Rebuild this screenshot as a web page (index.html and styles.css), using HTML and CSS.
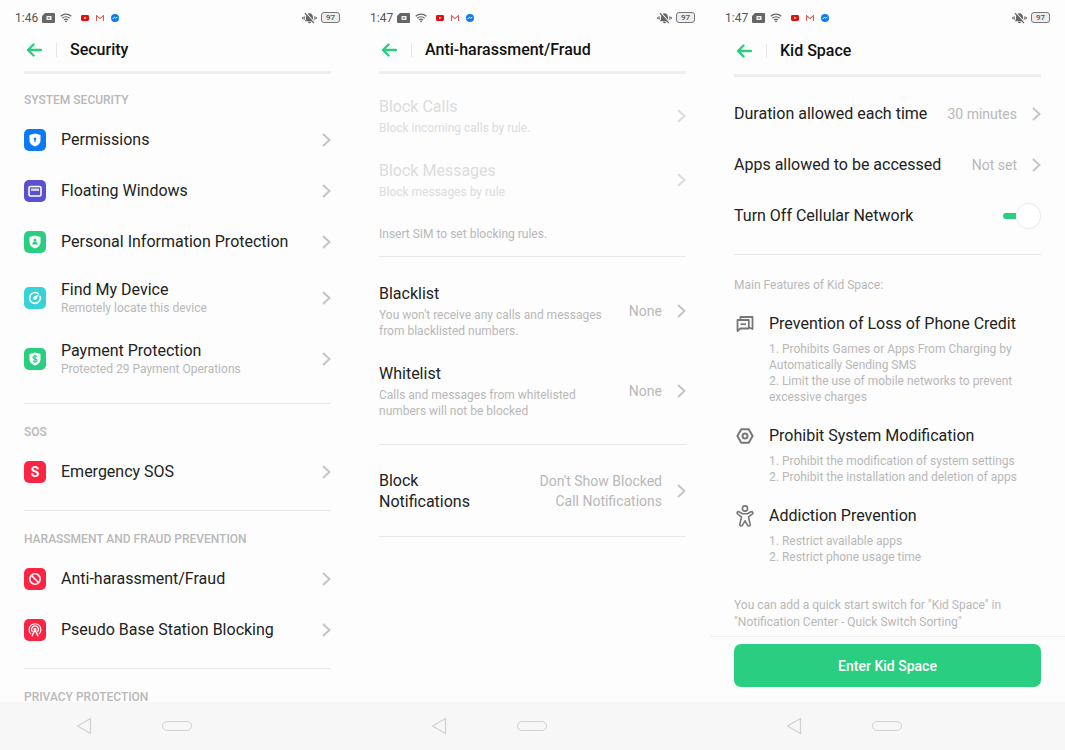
FILE: index.html
```html
<!DOCTYPE html>
<html lang="en">

<head>
    <meta charset="UTF-8">
    <meta name="viewport" content="width=device-width, initial-scale=1.0">
    <title>Security</title>
    <link rel="stylesheet" href="styles.css">
</head>

<body>
    <!-- shared icons -->
    <svg class="sprite" aria-hidden="true">
        <symbol id="sim" viewBox="0 0 13 10">
            <path d="M3 0h9a1 1 0 0 1 1 1v8a1 1 0 0 1-1 1H1a1 1 0 0 1-1-1V3z" fill="#666" />
            <rect x="4.5" y="3" width="5" height="4" fill="#f2f2f2" />
            <path d="M5.8 4l2 2M7.8 4l-2 2" stroke="#666" stroke-width=".7" />
        </symbol>
        <symbol id="wifi" viewBox="0 0 12 10">
            <g fill="none" stroke="#666" stroke-width="1.2">
                <path d="M.7 3.2a8 8 0 0 1 10.6 0" />
                <path d="M2.4 5.2a5.4 5.4 0 0 1 7.2 0" />
                <path d="M4 7a3 3 0 0 1 4 0" />
            </g>
            <path d="M4.8 8l1.2 1.6L7.2 8a2 2 0 0 0-2.4 0z" fill="#666" />
        </symbol>
        <symbol id="youtube" viewBox="0 0 8 6">
            <rect width="8" height="6" rx="1.4" fill="#e80c0c" />
            <path d="M3.2 1.7v2.6L5.5 3z" fill="#fff" />
        </symbol>
        <symbol id="gmail" viewBox="0 0 8 6">
            <path d="M.5 6V.6L4 3.6 7.5.6V6" fill="none" stroke="#dd5a50" stroke-width="1.1" />
        </symbol>
        <symbol id="messenger" viewBox="0 0 8 8">
            <circle cx="4" cy="4" r="4" fill="#0b7cf5" />
            <path d="M1.7 5l1.7-1.8 1.2 1L6.3 3.2" fill="none" stroke="#fff" stroke-width="1" />
        </symbol>
        <symbol id="mute" viewBox="0 0 15 12">
            <path d="M2.8 9.200c1-1 1.200-2 1.200-3.800C4 3 5.400 1.300 7.500 1.300S11 3 11 5.400c0 1.800.2 2.800 1.200 3.800z M6 9.800h3a1.500 1.500 0 0 1-3 0z" fill="#666" />
            <path d="M4 .9l9 10" stroke="#fdfdfd" stroke-width="1.200" />
            <path d="M2.900 1.100l9 10" stroke="#666" stroke-width="1.300" />
            <path d="M2.200 4.200v3.600M.7 5v2M12.800 4.200v3.600M14.300 5v2" stroke="#777" stroke-width="1.200" />
        </symbol>
        <symbol id="back" viewBox="0 0 16 14">
            <path d="M7.500 1.500L2 7l5.500 5.500M2 7h13" fill="none" stroke="#2ace80" stroke-width="2.400" stroke-linecap="round" stroke-linejoin="round" />
        </symbol>
        <symbol id="chevron" viewBox="0 0 9 14">
            <path d="M1 1l6.500 6L1 13" fill="none" stroke="currentColor" stroke-width="1.900" />
        </symbol>
        <symbol id="nav-back" viewBox="0 0 16 18">
            <path d="M14.500 1.500v15L1.500 9z" fill="none" stroke="#d2d2d2" stroke-width="1.300" stroke-linejoin="round" />
        </symbol>
    </svg>

    <main class="phones">
        <section class="phone">
            <div class="status">
                <span class="time">1:46</span>
                <svg width="13" height="10"><use href="#sim" /></svg>
                <svg class="wifi" width="12" height="10"><use href="#wifi" /></svg>
                <svg class="app" width="8" height="6"><use href="#youtube" /></svg>
                <svg class="app" width="8" height="6"><use href="#gmail" /></svg>
                <svg class="app" width="8" height="8"><use href="#messenger" /></svg>
                <svg class="mute" width="15" height="12"><use href="#mute" /></svg>
                <span class="battery">97</span>
            </div>
            <header class="header">
                <a href="#" aria-label="Back"><svg width="16" height="14"><use href="#back" /></svg></a>
                <h1>Security</h1>
            </header>
            <div class="content">
                <div class="group first">
                    <h2>SYSTEM SECURITY</h2>
                    <a class="row" href="#">
                        <svg class="icon blue" viewBox="0 0 22 22">
                            <path d="M11 4.500l5.500 1.500v5.500c0 3-2.500 5-5.500 6-3-1-5.500-3-5.500-6V6z" fill="#fff" />
                            <circle cx="11" cy="9.800" r="1.300" fill="#0d7af5" />
                            <path d="M11 10v3.200" stroke="#0d7af5" stroke-width="1.200" />
                        </svg>
                        <span class="text"><span class="title">Permissions</span></span>
                        <svg class="chevron"><use href="#chevron" /></svg>
                    </a>
                    <a class="row" href="#">
                        <svg class="icon purple" viewBox="0 0 22 22">
                            <rect x="5" y="6.500" width="12" height="9.500" rx="1.500" fill="none" stroke="#fff" stroke-width="1.600" />
                            <rect x="7" y="8.500" width="8" height="2.500" fill="#d6d2f8" />
                        </svg>
                        <span class="text"><span class="title">Floating Windows</span></span>
                        <svg class="chevron"><use href="#chevron" /></svg>
                    </a>
                    <a class="row" href="#">
                        <svg class="icon green" viewBox="0 0 22 22">
                            <path d="M11 4.500l5.500 1.500v5.500c0 3-2.500 5-5.500 6-3-1-5.500-3-5.500-6V6z" fill="#fff" />
                            <circle cx="11" cy="8.900" r="1.500" fill="#2ace80" />
                            <path d="M8.200 13.600c.2-2 1.300-3 2.800-3s2.600 1 2.800 3z" fill="#2ace80" />
                        </svg>
                        <span class="text"><span class="title">Personal Information Protection</span></span>
                        <svg class="chevron"><use href="#chevron" /></svg>
                    </a>
                    <a class="row tall" href="#">
                        <svg class="icon teal" viewBox="0 0 22 22">
                            <path d="M14.300 6.700A5.400 5.400 0 1 0 16.200 9.500" fill="none" stroke="#fff" stroke-width="1.600" stroke-linecap="round" />
                            <path d="M15 7.200l-2.300 4.600a1.900 1.900 0 1 1-2.500-2.400z" fill="#fff" />
                        </svg>
                        <span class="text"><span class="title">Find My Device</span><span class="sub">Remotely locate this device</span></span>
                        <svg class="chevron"><use href="#chevron" /></svg>
                    </a>
                    <a class="row tall" href="#">
                        <svg class="icon green" viewBox="0 0 22 22">
                            <path d="M11 4.500l5.500 1.500v5.500c0 3-2.500 5-5.500 6-3-1-5.500-3-5.500-6V6z" fill="#fff" />
                            <path d="M13 8.800c-.5-.8-1.100-1-2-1-1.200 0-2 .6-2 1.500 0 2.100 4.100 1 4.100 3.100 0 .9-.9 1.500-2.100 1.500-1 0-1.700-.4-2.100-1.100M11 6.800v8" fill="none" stroke="#2ace80" stroke-width="1.100" />
                        </svg>
                        <span class="text"><span class="title">Payment Protection</span><span class="sub">Protected 29 Payment Operations</span></span>
                        <svg class="chevron"><use href="#chevron" /></svg>
                    </a>
                </div>
                <div class="group">
                    <h2>SOS</h2>
                    <a class="row" href="#">
                        <span class="icon red letter">S</span>
                        <span class="text"><span class="title">Emergency SOS</span></span>
                        <svg class="chevron"><use href="#chevron" /></svg>
                    </a>
                </div>
                <div class="group">
                    <h2>HARASSMENT AND FRAUD PREVENTION</h2>
                    <a class="row" href="#">
                        <svg class="icon red" viewBox="0 0 22 22">
                            <circle cx="11" cy="11" r="5.200" fill="none" stroke="#fff" stroke-width="1.600" />
                            <path d="M7.300 7.300l7.400 7.400" stroke="#fff" stroke-width="1.600" />
                        </svg>
                        <span class="text"><span class="title">Anti-harassment/Fraud</span></span>
                        <svg class="chevron"><use href="#chevron" /></svg>
                    </a>
                    <a class="row" href="#">
                        <svg class="icon red" viewBox="0 0 22 22">
                            <g fill="none" stroke="#fff" stroke-width="1.200" stroke-linecap="round">
                                <path d="M6.700 14.700a5.900 5.900 0 1 1 8.600 0" />
                                <path d="M8.300 12.600a3.400 3.400 0 1 1 5.400 0" />
                                <path d="M11 10.500l-2.800 6.300M11 10.500l2.800 6.300" stroke-width="1.500" />
                            </g>
                            <circle cx="11" cy="10.300" r="1.300" fill="#fff" />
                        </svg>
                        <span class="text"><span class="title">Pseudo Base Station Blocking</span></span>
                        <svg class="chevron"><use href="#chevron" /></svg>
                    </a>
                </div>
                <div class="group">
                    <h2>PRIVACY PROTECTION</h2>
                </div>
            </div>
            <nav class="navbar">
                <a href="#" aria-label="Back"><svg width="16" height="18"><use href="#nav-back" /></svg></a>
                <a class="home" href="#" aria-label="Home"></a>
            </nav>
        </section>

        <section class="phone">
            <div class="status">
                <span class="time">1:47</span>
                <svg width="13" height="10"><use href="#sim" /></svg>
                <svg class="wifi" width="12" height="10"><use href="#wifi" /></svg>
                <svg class="app" width="8" height="6"><use href="#youtube" /></svg>
                <svg class="app" width="8" height="6"><use href="#gmail" /></svg>
                <svg class="app" width="8" height="8"><use href="#messenger" /></svg>
                <svg class="mute" width="15" height="12"><use href="#mute" /></svg>
                <span class="battery">97</span>
            </div>
            <header class="header">
                <a href="#" aria-label="Back"><svg width="16" height="14"><use href="#back" /></svg></a>
                <h1>Anti-harassment/Fraud</h1>
            </header>
            <div class="content fraud">
                <div class="group plain">
                    <a class="row disabled" href="#" aria-disabled="true">
                        <span class="text"><span class="title">Block Calls</span><span class="sub">Block incoming calls by rule.</span></span>
                        <svg class="chevron"><use href="#chevron" /></svg>
                    </a>
                    <a class="row disabled" href="#" aria-disabled="true">
                        <span class="text"><span class="title">Block Messages</span><span class="sub">Block messages by rule</span></span>
                        <svg class="chevron"><use href="#chevron" /></svg>
                    </a>
                    <p class="hint">Insert SIM to set blocking rules.</p>
                </div>
                <div class="group">
                    <a class="row list" href="#">
                        <span class="text"><span class="title">Blacklist</span><span class="sub">You won't receive any calls and messages from blacklisted numbers.</span></span>
                        <span class="value">None</span>
                        <svg class="chevron"><use href="#chevron" /></svg>
                    </a>
                    <a class="row list" href="#">
                        <span class="text"><span class="title">Whitelist</span><span class="sub">Calls and messages from whitelisted numbers will not be blocked</span></span>
                        <span class="value">None</span>
                        <svg class="chevron"><use href="#chevron" /></svg>
                    </a>
                </div>
                <div class="group">
                    <a class="row" href="#">
                        <span class="text"><span class="title">Block<br>Notifications</span></span>
                        <span class="value">Don't Show Blocked<br>Call Notifications</span>
                        <svg class="chevron"><use href="#chevron" /></svg>
                    </a>
                </div>
            </div>
            <nav class="navbar">
                <a href="#" aria-label="Back"><svg width="16" height="18"><use href="#nav-back" /></svg></a>
                <a class="home" href="#" aria-label="Home"></a>
            </nav>
        </section>

        <section class="phone kids">
            <div class="status">
                <span class="time">1:47</span>
                <svg width="13" height="10"><use href="#sim" /></svg>
                <svg class="wifi" width="12" height="10"><use href="#wifi" /></svg>
                <svg class="app" width="8" height="6"><use href="#youtube" /></svg>
                <svg class="app" width="8" height="6"><use href="#gmail" /></svg>
                <svg class="app" width="8" height="8"><use href="#messenger" /></svg>
                <svg class="mute" width="15" height="12"><use href="#mute" /></svg>
                <span class="battery">97</span>
            </div>
            <header class="header">
                <a href="#" aria-label="Back"><svg width="16" height="14"><use href="#back" /></svg></a>
                <h1>Kid Space</h1>
            </header>
            <div class="content">
                <div class="group plain">
                    <a class="row" href="#">
                        <span class="text"><span class="title">Duration allowed each time</span></span>
                        <span class="value">30 minutes</span>
                        <svg class="chevron"><use href="#chevron" /></svg>
                    </a>
                    <a class="row" href="#">
                        <span class="text"><span class="title">Apps allowed to be accessed</span></span>
                        <span class="value">Not set</span>
                        <svg class="chevron"><use href="#chevron" /></svg>
                    </a>
                    <div class="row">
                        <label class="text title" for="cellular">Turn Off Cellular Network</label>
                        <input class="switch" type="checkbox" role="switch" id="cellular" checked>
                    </div>
                </div>
                <div class="features">
                    <p>Main Features of Kid Space:</p>
                    <div class="feature">
                        <svg viewBox="0 0 18 22">
                            <g fill="none" stroke="#777" stroke-width="1.800" stroke-linejoin="round">
                                <path d="M1.500 7h11.300v8.500H4.300L1.500 18z" />
                                <path d="M4.500 7V4h12v12l-3.500-1.500" />
                                <path d="M4.500 11.200h5.500" />
                            </g>
                        </svg>
                        <div>
                            <h3>Prevention of Loss of Phone Credit</h3>
                            <p>1. Prohibits Games or Apps From Charging by Automatically Sending SMS</p>
                            <p>2. Limit the use of mobile networks to prevent excessive charges</p>
                        </div>
                    </div>
                    <div class="feature">
                        <svg viewBox="0 0 18 22">
                            <g fill="none" stroke="#777" stroke-width="2" stroke-linejoin="round">
                                <path d="M5.300 4.200h7.400L16.600 11l-3.900 6.800H5.300L1.400 11z" />
                                <circle cx="9" cy="11" r="2.500" />
                            </g>
                        </svg>
                        <div>
                            <h3>Prohibit System Modification</h3>
                            <p>1. Prohibit the modification of system settings</p>
                            <p>2. Prohibit the installation and deletion of apps</p>
                        </div>
                    </div>
                    <div class="feature">
                        <svg viewBox="0 0 18 22">
                            <g fill="none" stroke="#777" stroke-width="1.600" stroke-linejoin="round">
                                <circle cx="9" cy="3.500" r="2.600" />
                                <path d="M6.500 8.800L3 6.800c-1.500-.7-2.600 1.300-1.200 2.300l3.700 2.700-1.700 7.600c-.2 1.700 2 2.200 2.700.8L9 15.800l2.500 4.400c.7 1.400 2.900.9 2.700-.8l-1.700-7.600 3.700-2.700c1.400-1 .3-3-1.200-2.300l-3.500 2z" />
                            </g>
                        </svg>
                        <div>
                            <h3>Addiction Prevention</h3>
                            <p>1. Restrict available apps</p>
                            <p>2. Restrict phone usage time</p>
                        </div>
                    </div>
                    <p class="tip">You can add a quick start switch for "Kid Space" in "Notification Center - Quick Switch Sorting"</p>
                </div>
            </div>
            <div class="footer">
                <button type="button">Enter Kid Space</button>
            </div>
            <nav class="navbar">
                <a href="#" aria-label="Back"><svg width="16" height="18"><use href="#nav-back" /></svg></a>
                <a class="home" href="#" aria-label="Home"></a>
            </nav>
        </section>
    </main>
</body>

</html>
```
FILE: styles.css
```css
* {
    box-sizing: border-box;
}

body {
    font-family: Roboto, sans-serif;
    font-size: 12px;
    line-height: 16px;
    color: #b8b8b8;
    background: #fdfdfd;
    margin: 0;
}

h1,
h2,
h3,
p {
    margin: 0;
}

a {
    color: inherit;
    text-decoration: none;
}

svg {
    display: block;
    flex: none;
}

.sprite {
    display: none;
}

.phones {
    display: grid;
    grid-template-columns: repeat(3, 1fr);
    height: 100vh;
}

.phone {
    display: flex;
    flex-direction: column;
    min-width: 0;
    min-height: 0;
}

/* status bar */
.status {
    display: flex;
    align-items: center;
    height: 28px;
    padding: 7px 15px 0;
    flex: none;
}

.time {
    font-size: 12px;
    color: #555;
    margin-right: 4px;
}

.wifi {
    margin: 0 2px 0 5px;
}

.app {
    margin-left: 7px;
}

.mute {
    margin-left: auto;
}

.battery {
    width: 19px;
    height: 11px;
    margin-left: 4px;
    border: 1px solid #777;
    border-radius: 3px;
    background: #eee;
    color: #555;
    font-size: 8px;
    font-weight: 500;
    line-height: 9px;
    text-align: center;
}

/* page title */
.header {
    display: flex;
    align-items: center;
    height: 46px;
    margin: 0 24px;
    padding-left: 2px;
    border-bottom: 3px solid #eee;
    flex: none;
}

.kids .header {
    height: 49px;
}

.header h1 {
    margin-left: 14px;
    padding-left: 13px;
    border-left: 1px solid #e6e6e6;
    font-size: 16px;
    font-weight: 500;
    line-height: 14px;
    color: #111;
}

.content {
    flex: 1;
    min-height: 0;
    overflow: hidden;
    padding: 0 24px;
}

/* settings list */
.group {
    padding: 14px 0 13px;
    border-bottom: 1px solid #e8e8e8;
}

.group.first {
    padding: 12px 0 14px;
}

.group.plain {
    padding-top: 10px;
}

.kids .group.plain {
    padding-top: 11px;
}

.group h2 {
    padding: 8px 0;
    font-size: 12px;
    font-weight: 500;
    line-height: 12px;
}

.row {
    display: flex;
    align-items: center;
    min-height: 51px;
}

.row.tall {
    min-height: 61px;
}

.fraud .row {
    min-height: 64px;
}

.fraud .list {
    min-height: 80px;
}

.text {
    flex: 1;
    min-width: 0;
}

.title {
    display: block;
    font-size: 16px;
    line-height: 21px;
    color: #222;
}

.sub {
    display: block;
}

.fraud .sub {
    margin-top: 3px;
}

.value {
    margin-left: 16px;
    font-size: 14px;
    line-height: 20px;
    text-align: right;
}

.chevron {
    width: 9px;
    height: 14px;
    margin-left: 15px;
    color: #c4c4c4;
}

.disabled .title,
.disabled .sub,
.disabled .chevron {
    color: #dcdcdc;
}

.fraud .plain {
    padding-bottom: 0;
}

.hint {
    line-height: 44px;
}

.icon {
    width: 22px;
    height: 22px;
    margin-right: 15px;
    border-radius: 5px;
}

.blue {
    background: #0d7af5;
}

.purple {
    background: #5a50d2;
}

.green {
    background: #2ace80;
}

.teal {
    background: #35d3d6;
}

.red {
    background: #fb2443;
}

.letter {
    color: #fff;
    font-size: 14px;
    font-weight: 700;
    line-height: 22px;
    text-align: center;
}

.switch {
    appearance: none;
    display: flex;
    align-items: center;
    width: 38px;
    height: 24px;
    margin: 0;
}

.switch::before {
    content: "";
    width: 14px;
    height: 6px;
    border-radius: 3px 0 0 3px;
    background: #2ace80;
}

.switch::after {
    content: "";
    width: 24px;
    height: 24px;
    border: 1px solid #ececec;
    border-radius: 50%;
    background: #fff;
}

/* kid space */
.features {
    padding-top: 22px;
}

.feature {
    display: flex;
    margin-top: 20px;
}

.feature svg {
    width: 18px;
    height: 22px;
    margin: 0 15px 0 2px;
}

.feature h3 {
    margin-bottom: 7px;
    font-size: 16px;
    font-weight: 400;
    line-height: 21px;
    color: #222;
}

.tip {
    margin-top: 32px;
    line-height: 17px;
}

.footer {
    padding: 7px 24px 15px;
    border-top: 1px solid #f0f0f0;
}

.footer button {
    display: block;
    width: 100%;
    height: 43px;
    border: none;
    border-radius: 7px;
    background: #2ace80;
    color: #fff;
    font-family: inherit;
    font-size: 14px;
    font-weight: 500;
}

/* system navigation */
.navbar {
    display: flex;
    align-items: center;
    height: 48px;
    padding-left: 76px;
    background: #f7f7f7;
    flex: none;
}

.home {
    width: 30px;
    height: 10px;
    margin-left: 70px;
    border: 1px solid #d2d2d2;
    border-radius: 5px;
}
```
